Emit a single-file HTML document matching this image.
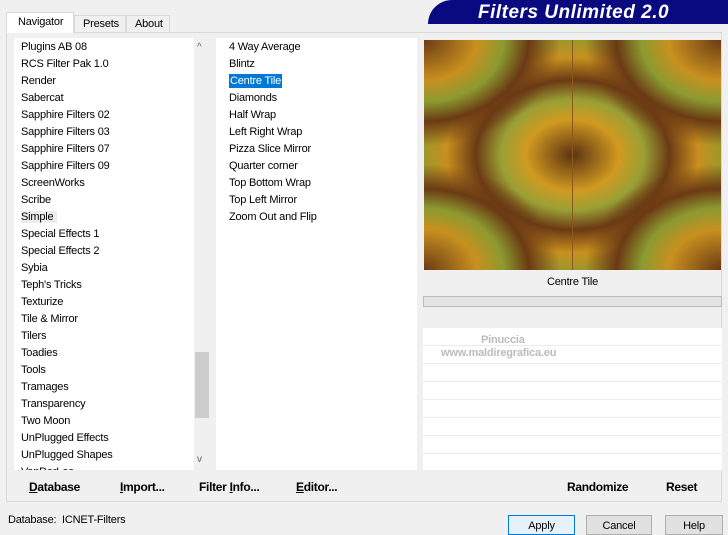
<!DOCTYPE html><html><head><style>
*{margin:0;padding:0;box-sizing:border-box}
body{width:728px;height:528px;background:#f0f0f0;font-family:"Liberation Sans",sans-serif;font-size:11px;letter-spacing:-0.2px;color:#000;position:relative;overflow:hidden}
.a{position:absolute}
.list div{height:17px;line-height:17px;padding-left:7px;white-space:nowrap}
.btn{font-weight:bold;font-size:12px;letter-spacing:-0.3px}
.q{position:absolute;width:148px;height:115px;background:
radial-gradient(ellipse at 0 0,#6b3a14 0,#c8901f 25%,#8c9a30 38%,#6b3a14 50%,transparent 65%),
radial-gradient(ellipse at 100% 100%,#5e3312 0,#d09a20 22%,#9aa035 34%,#6b3a14 46%,#c8901f 60%,#8c9a30 75%,#6b3a14 90%)}
</style></head><body>
<div class="a" style="left:428px;top:0;width:300px;height:24px;background:#0a0a80;border-radius:30px 0 0 0"></div>
<div class="a" style="left:478px;top:2px;font:italic bold 19px 'Liberation Sans',sans-serif;color:#fff;letter-spacing:0.5px">Filters Unlimited 2.0</div>
<div class="a" style="left:6px;top:32px;width:716px;height:470px;border:1px solid #d9d9d9;background:#f0f0f0"></div>
<div class="a" style="left:6px;top:12px;width:68px;height:21px;background:#fff;border:1px solid #d9d9d9;border-bottom:none;padding:3px 0 0 11px">Navigator</div>
<div class="a" style="left:74px;top:15px;width:52px;height:18px;border:1px solid #d9d9d9;border-bottom:none;padding:2px 0 0 8px">Presets</div>
<div class="a" style="left:126px;top:15px;width:44px;height:18px;border:1px solid #d9d9d9;border-bottom:none;padding:2px 0 0 8px">About</div>
<div class="a list" style="left:14px;top:38px;width:180px;height:432px;background:#fff;overflow:hidden;padding-top:1px">
<div>Plugins AB 08</div><div>RCS Filter Pak 1.0</div><div>Render</div><div>Sabercat</div><div>Sapphire Filters 02</div><div>Sapphire Filters 03</div><div>Sapphire Filters 07</div><div>Sapphire Filters 09</div><div>ScreenWorks</div><div>Scribe</div><div><span style="background:#ececec;padding-right:4px">Simple</span></div><div>Special Effects 1</div><div>Special Effects 2</div><div>Sybia</div><div>Teph's Tricks</div><div>Texturize</div><div>Tile &amp; Mirror</div><div>Tilers</div><div>Toadies</div><div>Tools</div><div>Tramages</div><div>Transparency</div><div>Two Moon</div><div>UnPlugged Effects</div><div>UnPlugged Shapes</div><div>VanDerLee</div>
</div>
<div class="a" style="left:194px;top:38px;width:16px;height:432px;background:#f0f0f0"></div>
<div class="a" style="left:195px;top:352px;width:14px;height:66px;background:#cdcdcd"></div>
<div class="a" style="left:197px;top:42px;font-size:10px;color:#606060">^</div>
<div class="a" style="left:197px;top:454px;font-size:10px;color:#606060">v</div>
<div class="a list" style="left:216px;top:38px;width:201px;height:432px;background:#fff;padding-top:1px">
<div style="padding-left:13px">4 Way Average</div><div style="padding-left:13px">Blintz</div><div style="padding-left:13px"><span style="background:#0078d7;color:#fff;padding:1px 1px">Centre Tile</span></div><div style="padding-left:13px">Diamonds</div><div style="padding-left:13px">Half Wrap</div><div style="padding-left:13px">Left Right Wrap</div><div style="padding-left:13px">Pizza Slice Mirror</div><div style="padding-left:13px">Quarter corner</div><div style="padding-left:13px">Top Bottom Wrap</div><div style="padding-left:13px">Top Left Mirror</div><div style="padding-left:13px">Zoom Out and Flip</div>
</div>
<div class="a" style="left:424px;top:40px;width:297px;height:230px;overflow:hidden;background:#8a5a1c">
<div class="q" style="left:0;top:0"></div>
<div class="q" style="left:149px;top:0;transform:scaleX(-1)"></div>
<div class="q" style="left:0;top:115px;transform:scaleY(-1)"></div>
<div class="q" style="left:149px;top:115px;transform:scale(-1,-1)"></div>
</div>
<div class="a" style="left:424px;top:276px;width:297px;text-align:center">Centre Tile</div>
<div class="a" style="left:423px;top:296px;width:299px;height:11px;background:#e3e3e3;border:1px solid #bcbcbc"></div>
<div class="a" style="left:423px;top:328px;width:299px;height:142px;background:repeating-linear-gradient(#fff 0 17px,#ebebeb 17px 18px)"></div>
<div class="a" style="left:481px;top:334px;font-size:11px;font-weight:bold;color:#bbb">Pinuccia</div>
<div class="a" style="left:441px;top:347px;font-size:11px;font-weight:bold;color:#bbb">www.maldiregrafica.eu</div>
<div class="a btn" style="left:29px;top:480px"><u>D</u>atabase</div>
<div class="a btn" style="left:120px;top:480px"><u>I</u>mport...</div>
<div class="a btn" style="left:199px;top:480px">Filter <u>I</u>nfo...</div>
<div class="a btn" style="left:296px;top:480px"><u>E</u>ditor...</div>
<div class="a btn" style="left:567px;top:480px">Randomize</div>
<div class="a btn" style="left:666px;top:480px">Reset</div>
<div class="a" style="left:8px;top:514px">Database:&nbsp; ICNET-Filters</div>
<div class="a" style="left:508px;top:515px;width:67px;height:20px;border:1px solid #0078d7;background:#e5f1fb;text-align:center;padding-top:4px">Apply</div>
<div class="a" style="left:586px;top:515px;width:66px;height:20px;border:1px solid #adadad;background:#e1e1e1;text-align:center;padding-top:4px">Cancel</div>
<div class="a" style="left:665px;top:515px;width:58px;height:20px;border:1px solid #adadad;background:#e1e1e1;text-align:center;padding-top:4px">Help</div>
</body></html>
